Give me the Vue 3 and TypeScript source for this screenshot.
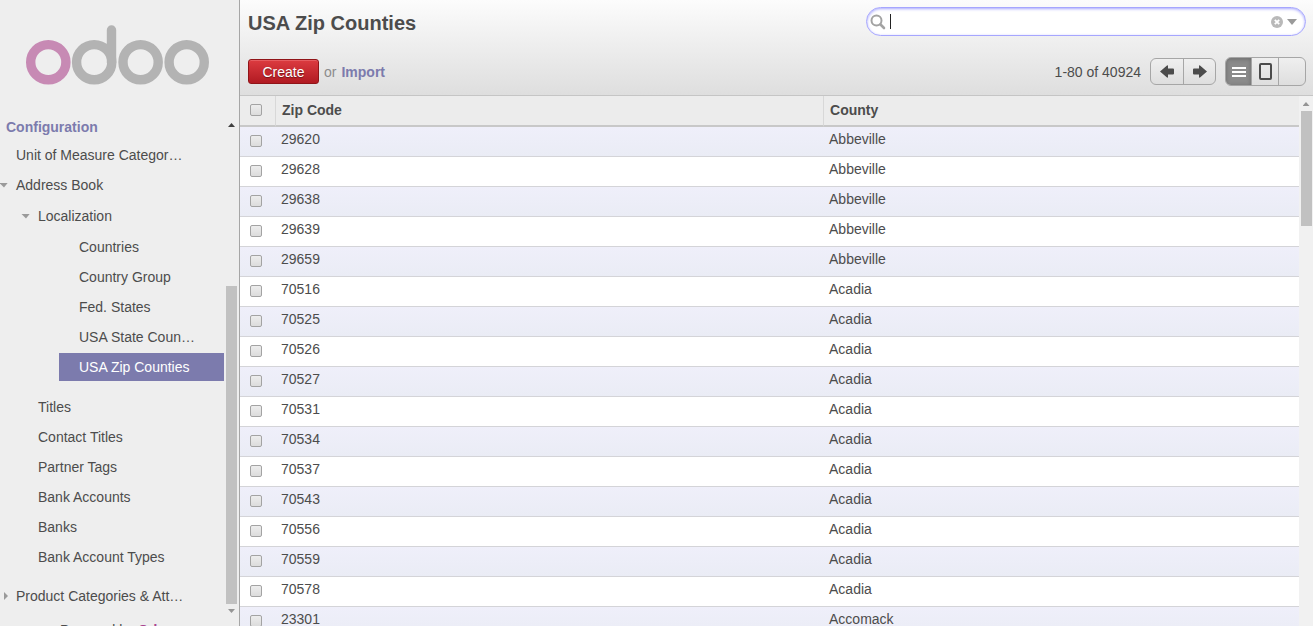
<script setup lang="ts">
import { onMounted, ref } from 'vue'

interface ZipRow {
  code: string
  county: string
}

const query = ref('')
const searchBox = ref<HTMLInputElement | null>(null)

onMounted(() => searchBox.value?.focus())

const localizationItems: string[] = [
  'Countries',
  'Country Group',
  'Fed. States',
  'USA State Coun…',
  'USA Zip Counties',
]
const activeItem = 'USA Zip Counties'

const addressBookItems: string[] = [
  'Titles',
  'Contact Titles',
  'Partner Tags',
  'Bank Accounts',
  'Banks',
  'Bank Account Types',
]

const codesByCounty: [string, string[]][] = [
  ['Abbeville', ['29620', '29628', '29638', '29639', '29659']],
  ['Acadia', ['70516', '70525', '70526', '70527', '70531', '70534', '70537', '70543', '70556', '70559', '70578']],
  ['Accomack', ['23301']],
]

const rows: ZipRow[] = codesByCounty.flatMap(([county, codes]) =>
  codes.map((code) => ({ code, county })),
)
</script>

<template>
  <div class="app">
    <aside class="sidebar">
      <a class="logo" href="#" aria-label="odoo">
        <svg viewBox="0 0 184 60" width="184" height="60" fill="none" stroke-width="9.400">
          <g stroke="#b3b3b3">
            <circle cx="68.200" cy="37.200" r="17.600" />
            <path d="M85.500 37.200V5" stroke-linecap="round" />
            <circle cx="114.600" cy="37.200" r="17.600" />
            <circle cx="160.700" cy="37.200" r="17.600" />
          </g>
          <circle cx="22.300" cy="37.200" r="17.600" stroke="#c78ab4" />
        </svg>
      </a>
      <div class="menu">
        <nav class="tree">
          <h2 class="section">Configuration</h2>
          <ul>
            <li><a class="item top" href="#">Unit of Measure Categor…</a></li>
            <li>
              <a class="item top open" href="#">Address Book</a>
              <ul class="nested">
                <li>
                  <a class="item sub open" href="#">Localization</a>
                  <ul class="leaves">
                    <li v-for="name in localizationItems" :key="name">
                      <a class="leaf" :class="{ active: name === activeItem }" href="#">{{ name }}</a>
                    </li>
                  </ul>
                </li>
                <li v-for="name in addressBookItems" :key="name">
                  <a class="item sub" href="#">{{ name }}</a>
                </li>
              </ul>
            </li>
            <li><a class="item top closed" href="#">Product Categories &amp; Att…</a></li>
          </ul>
          <p class="powered">Powered by <a href="#">Odoo</a></p>
        </nav>
        <div class="scrollbar side-bar" aria-hidden="true">
          <span class="arrow up dark"></span>
          <span class="thumb"></span>
          <span class="arrow down"></span>
        </div>
      </div>
    </aside>

    <main class="content">
      <header class="panel">
        <div class="panel-row title-row">
          <h1>USA Zip Counties</h1>
          <div class="search" :class="{ empty: query === '' }">
            <svg class="lens" viewBox="0 0 16 16" width="16" height="16" fill="none" stroke="#a3a3a3">
              <circle cx="6.500" cy="6.500" r="5" stroke-width="2" />
              <path d="M10.500 10.500L14 14" stroke-width="2.600" stroke-linecap="round" />
            </svg>
            <input ref="searchBox" v-model="query" type="text" aria-label="Search" />
            <button type="button" class="icon-btn" aria-label="Clear search" @click="query = ''">
              <svg viewBox="0 0 12 12" width="12" height="12">
                <circle cx="6" cy="6" r="6" fill="#b9b9b9" />
                <path d="M3.800 3.800l4.400 4.400M8.200 3.800l-4.400 4.400" stroke="#fff" stroke-width="1.800" />
              </svg>
            </button>
            <button type="button" class="icon-btn" aria-label="Advanced search">
              <svg viewBox="0 0 10 6" width="10" height="6"><path d="M0 0h10L5 6z" fill="#9a9a9a" /></svg>
            </button>
          </div>
        </div>
        <div class="panel-row">
          <div class="actions">
            <button type="button" class="create">Create</button>
            <span class="or">or</span>
            <a href="#" class="import">Import</a>
          </div>
          <div class="tools">
            <span class="range">1-80 of 40924</span>
            <div class="group pager">
              <button type="button" aria-label="Previous page">
                <svg viewBox="0 0 14 13" width="14" height="13">
                  <path d="M0 6.500L7 0.500Q8 0 8 1V3.500H13Q14 3.500 14 4.500V8.500Q14 9.500 13 9.500H8V12Q8 13 7 12.500z" fill="#4c4c4c" />
                </svg>
              </button>
              <button type="button" aria-label="Next page">
                <svg viewBox="0 0 14 13" width="14" height="13">
                  <path d="M14 6.500L7 0.500Q6 0 6 1V3.500H1Q0 3.500 0 4.500V8.500Q0 9.500 1 9.500H6V12Q6 13 7 12.500z" fill="#4c4c4c" />
                </svg>
              </button>
            </div>
            <div class="group views">
              <button type="button" class="on" aria-label="List view">
                <svg viewBox="0 0 14 12" width="14" height="12" stroke="#fff" stroke-width="2">
                  <path d="M0 2H14M0 6H14M0 10H14" />
                </svg>
              </button>
              <button type="button" aria-label="Form view">
                <svg viewBox="0 0 13 17" width="13" height="17" fill="none" stroke="#4c4c4c" stroke-width="2">
                  <rect x="1" y="1" width="11" height="15" rx="1" />
                </svg>
              </button>
              <button type="button" aria-label="Other view"></button>
            </div>
          </div>
        </div>
      </header>

      <div class="list">
        <div class="table-wrap">
          <table>
            <colgroup>
              <col class="c-check" />
              <col class="c-zip" />
              <col />
            </colgroup>
            <thead>
              <tr>
                <th><input type="checkbox" aria-label="Select all" /></th>
                <th scope="col">Zip Code</th>
                <th scope="col">County</th>
              </tr>
            </thead>
            <tbody>
              <tr v-for="row in rows" :key="row.code">
                <td><input type="checkbox" :aria-label="'Select ' + row.code" /></td>
                <td>{{ row.code }}</td>
                <td>{{ row.county }}</td>
              </tr>
            </tbody>
          </table>
        </div>
        <div class="scrollbar main-bar" aria-hidden="true">
          <span class="arrow up"></span>
          <span class="thumb"></span>
        </div>
      </div>
    </main>
  </div>
</template>

<style>
body {
  margin: 0;
  overflow: hidden;
}
</style>

<style scoped>
.app {
  display: flex;
  height: 100vh;
  font-family: "Liberation Sans", Arial, sans-serif;
  font-size: 14px;
  color: #4c4c4c;
  background: #fff;
}
h1, h2, ul, p {
  margin: 0;
  padding: 0;
}
ul {
  list-style: none;
}
a {
  color: inherit;
  text-decoration: none;
}
button, input {
  font: inherit;
  color: inherit;
}

/* Sidebar */
.sidebar {
  flex: none;
  width: 239px;
  display: flex;
  flex-direction: column;
  background: #eeeeee;
  border-right: 1px solid #a6a6a6;
}
.logo {
  flex: none;
  height: 93px;
  padding: 25px 0 0 26px;
}
.logo svg {
  display: block;
}
.menu {
  flex: 1;
  min-height: 0;
  display: flex;
}
.tree {
  flex: 1;
  min-width: 0;
  overflow: hidden;
  white-space: nowrap;
}
.section {
  padding: 0 6px;
  font-size: 14px;
  line-height: 18px;
  height: 22px;
  color: #7c7bad;
}
.item {
  display: flex;
  align-items: center;
  height: 30px;
}
.item::before {
  content: "";
  flex: none;
  box-sizing: border-box;
}
.item.top::before {
  width: 16px;
}
.item.sub::before {
  width: 38px;
}
.item.open::before {
  height: 5px;
  background: #9a9a9a;
  clip-path: polygon(calc(100% - 17px) 0, calc(100% - 8px) 0, calc(100% - 12px) 100%);
}
.item.closed::before {
  height: 8px;
  background: #9a9a9a;
  clip-path: polygon(4px 0, 8px 50%, 4px 100%);
}
.nested {
  padding: 1px 0 9px;
}
.leaves {
  padding: 2px 2px 11px 59px;
  display: grid;
  gap: 2px;
}
.leaf {
  display: block;
  padding-left: 20px;
  line-height: 28px;
}
.leaf.active {
  color: #fff;
  background: #7c7bad;
}
.powered {
  padding: 10px 0 0 60px;
  line-height: 18px;
}
.powered a {
  font-weight: bold;
  color: #a8438e;
}

/* Scrollbars */
.scrollbar {
  flex: none;
  display: flex;
  flex-direction: column;
  align-items: center;
}
.thumb {
  background: #c1c1c1;
}
.arrow {
  flex: none;
  width: 7px;
  height: 4px;
  background: #959595;
}
.arrow.up {
  clip-path: polygon(50% 0, 100% 100%, 0 100%);
}
.arrow.down {
  clip-path: polygon(0 0, 100% 0, 50% 100%);
}
.arrow.dark {
  background: #404040;
}
.side-bar {
  width: 11px;
  padding: 5px 2px 13px 0;
}
.side-bar .thumb {
  width: 11px;
  height: 65%;
  margin: auto 0 5px;
}
.main-bar {
  width: 14px;
  padding-top: 6px;
  background: #f1f1f1;
}
.main-bar .thumb {
  align-self: flex-end;
  width: 11px;
  height: 22%;
  margin: 5px 1px 0 0;
}

/* Control panel */
.content {
  flex: 1;
  min-width: 0;
  display: flex;
  flex-direction: column;
}
.panel {
  flex: none;
  padding: 7px 7px 9px 8px;
  background: linear-gradient(#fcfcfc, #dedede);
  border-bottom: 1px solid #c5c5c5;
}
.panel-row {
  display: flex;
  align-items: center;
  justify-content: space-between;
}
.title-row {
  align-items: flex-start;
  height: 50px;
}
h1 {
  font-size: 20px;
  line-height: 32px;
}
.search {
  box-sizing: border-box;
  width: 41.6%;
  height: 29px;
  display: flex;
  align-items: center;
  gap: 4px;
  padding: 0 8px 0 3px;
  background: #fff;
  border: 1px solid #a6a6fe;
  border-radius: 15px;
  box-shadow: inset 0 1px 3px #a6a6fe;
}
.lens {
  flex: none;
}
.search input {
  flex: 1;
  min-width: 0;
  padding: 0;
  border: 0;
  outline: 0;
  background: none;
  line-height: 20px;
}
.search.empty:focus-within input {
  height: 15px;
  border-left: 1px solid #222;
  caret-color: transparent;
}
.icon-btn {
  display: flex;
  padding: 0;
  border: 0;
  background: none;
}
.actions {
  display: flex;
  align-items: center;
  gap: 5px;
}
.create {
  height: 25px;
  min-width: 71px;
  padding: 0 13px;
  border: 1px solid #901418;
  border-radius: 3px;
  color: #fff;
  background: linear-gradient(#dc3b40, #b11a22);
  box-shadow: inset 0 1px 0 #e65c60;
  text-shadow: 0 1px 1px rgba(0, 0, 0, 0.4);
}
.or {
  color: #8c8c8c;
}
.import {
  font-weight: bold;
  color: #7c7bad;
}
.tools {
  display: flex;
  align-items: center;
  gap: 9px;
}
.group {
  box-sizing: border-box;
  display: flex;
  border: 1px solid #a6a6a6;
  border-radius: 6px;
  background: linear-gradient(#efefef, #dedede);
  overflow: hidden;
}
.group button {
  display: flex;
  align-items: center;
  justify-content: center;
  padding: 0;
  border: 0;
  background: none;
}
.group button + button {
  border-left: 1px solid #a6a6a6;
}
.pager button {
  width: 32px;
  height: 25px;
}
.views button {
  width: 27px;
  height: 27px;
}
.views .on {
  width: 25px;
  background: #8b8b8b;
  box-shadow: inset 0 1px 4px #6a6a6a;
}

/* List */
.list {
  flex: 1;
  min-height: 0;
  display: flex;
}
.table-wrap {
  flex: 1;
  min-width: 0;
  overflow: hidden;
}
table {
  width: 100%;
  table-layout: fixed;
  border-collapse: separate;
  border-spacing: 0;
}
.c-check {
  width: 35px;
}
.c-zip {
  width: 51.75%;
}
th {
  box-sizing: border-box;
  height: 31px;
  padding: 0 6px;
  text-align: left;
  line-height: 29px;
  background: #ececec;
  border-bottom: 2px solid #c8c8c8;
}
th + th {
  border-left: 1px solid #d8d8d8;
}
td {
  box-sizing: border-box;
  height: 30px;
  padding: 0 6px 4px;
  line-height: 25px;
  border-bottom: 1px solid #d4d4d8;
}
tbody tr:nth-child(odd) {
  background: linear-gradient(#efeffa, #eaecf5);
}
th:first-child, td:first-child {
  padding: 0 0 2px 10px;
}
input[type="checkbox"] {
  appearance: none;
  display: block;
  box-sizing: border-box;
  width: 12px;
  height: 12px;
  margin: 0;
  border: 1px solid #a3a3a3;
  border-radius: 2px;
  background: linear-gradient(#ededed, #dcdcdc);
}
</style>
